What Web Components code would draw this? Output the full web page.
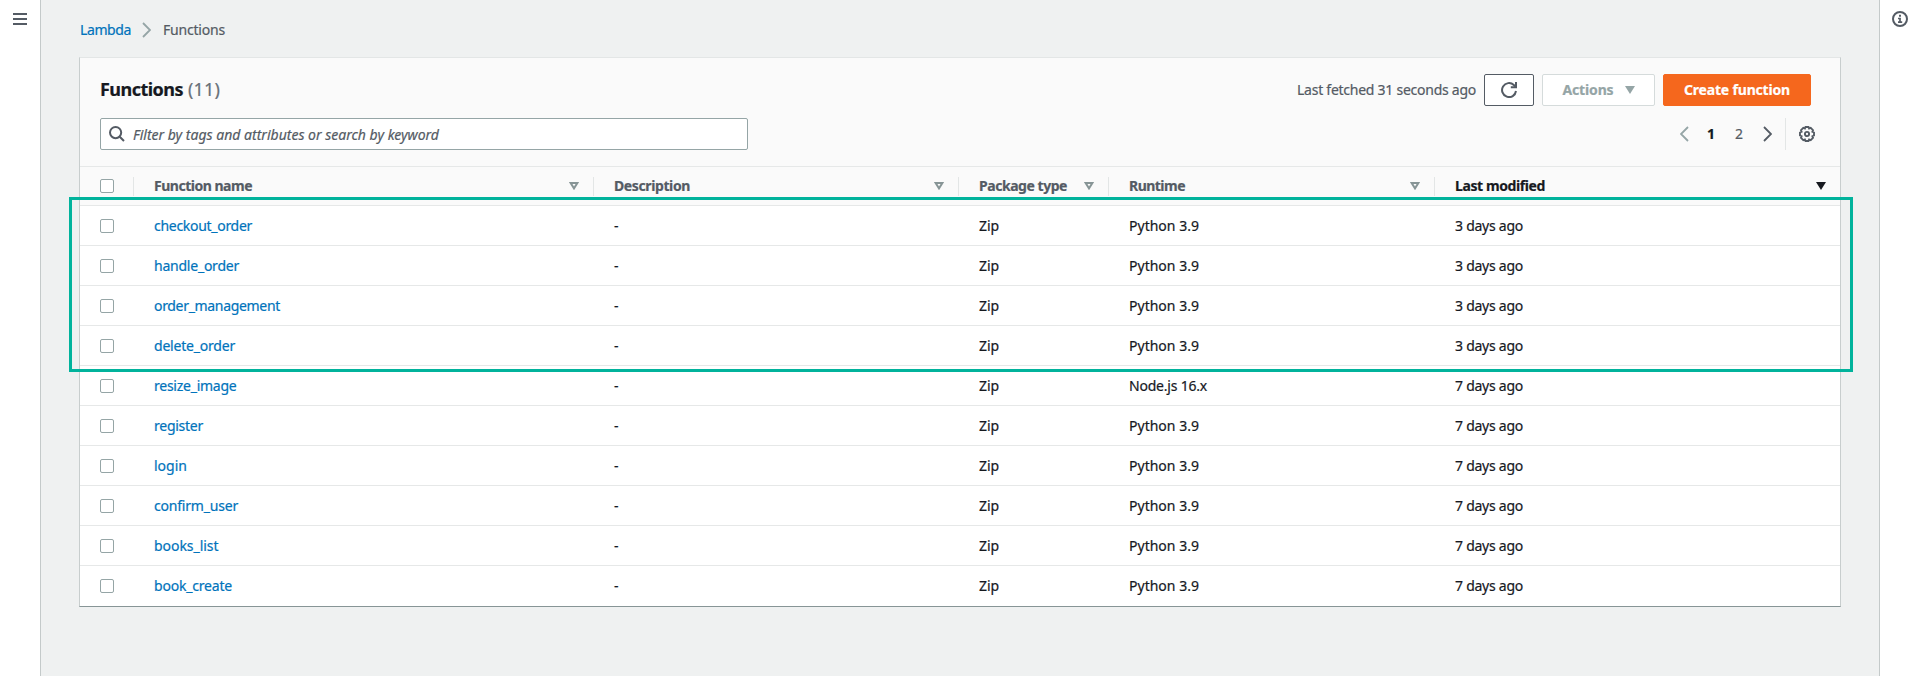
<!DOCTYPE html>
<html lang="en">
<head>
<meta charset="utf-8">
<title>Functions - Lambda</title>
<style>
html,body{margin:0;height:100%}
body{font:14px/22px "Noto Sans","Open Sans",sans-serif;color:#16191f;overflow:hidden;-webkit-text-stroke:.2px currentColor}
</style>
</head>
<body>
<console-shell>
  <crumb-trail></crumb-trail>
  <functions-panel></functions-panel>
</console-shell>
<script>
function define(name, html, setup) {
  customElements.define(name, class extends HTMLElement {
    connectedCallback() {
      if (this.shadowRoot) return;
      this.attachShadow({ mode: 'open' }).innerHTML = html;
      if (setup) setup.call(this, this.shadowRoot);
    }
  });
}

/* One line of text tracked to a given width. */
define('fit-text', `<style>:host{display:inline-block;white-space:pre;font-kerning:normal}span{display:inline-block}</style><span><slot></slot></span>`, function (root) {
  const w = parseFloat(this.getAttribute('w'));
  const s = root.querySelector('span');
  const n = this.textContent.length;
  const now = s.getBoundingClientRect().width;
  if (w && n > 1 && now) {
    s.style.letterSpacing = ((w - now) / n).toFixed(3) + 'px';
  }
});

const ICONS = {
  menu: ['14', '12', '<path d="M0 1h14M0 6h14M0 11h14" stroke-width="2"/>'],
  info: ['16', '16', '<circle cx="8" cy="8" r="7" stroke-width="2"/><path d="M6 7.5h2.9M8 7v4M6 11.2h4.2" stroke-width="1.7"/><path d="M7 4.8h2" stroke-width="1.9"/>'],
  chevron: ['9', '16', '<path d="M1 1l7 7-7 7" stroke-width="1.8"/>'],
  back: ['9', '16', '<path d="M8 1L1 8l7 7" stroke-width="1.8"/>'],
  search: ['16', '16', '<circle cx="6.6" cy="6.6" r="5.6" stroke-width="2"/><path d="M10.7 10.7l4.3 4.3" stroke-width="2"/>'],
  refresh: ['16', '16', '<path d="M15 9a7 7 0 1 1-2.2-6.1L15 5" stroke-width="2"/><path d="M15 0v5.2h-5.2" stroke-width="2"/>'],
  gear: ['16', '16', '<path d="M6.5 1h3l.6 1.5 1.6-.6 2.3 2.3-.6 1.6 1.6.7v3l-1.6.7.6 1.6-2.3 2.3-1.6-.6-.6 1.5h-3l-.6-1.5-1.6.6L2 11.800l.6-1.600L1 9.500v-3l1.600-.700L2 4.200l2.300-2.300 1.600.600z" stroke-width="1.9"/><circle cx="8" cy="8" r="2.100" stroke-width="1.900"/>'],
  caret: ['10', '8', '<path d="M0 0h10L5 8z" fill="currentColor" stroke="none"/>'],
  sort: ['10', '8', '<path d="M1.600 1h6.800L5 6.400z" stroke-width="2"/>']
};
define('ui-icon', `<style>:host{display:inline-flex;flex:none}svg{display:block;fill:none;stroke:currentColor}</style><div></div>`, function (root) {
  const [w, h, body] = ICONS[this.getAttribute('name')];
  root.querySelector('div').innerHTML = `<svg width="${w}" height="${h}" viewBox="0 0 ${w} ${h}">${body}</svg>`;
});

define('check-box', `<style>:host{display:block;box-sizing:border-box;width:14px;height:14px;border:1px solid #95a5a6;border-radius:2px;background:#fff}</style>`);

define('ui-button', `<style>
:host{display:flex;box-sizing:border-box;height:32px;align-items:center;justify-content:center;border:1px solid #545b64;border-radius:2px;background:#fff;color:#545b64;font-weight:700}
:host([kind=icon]){width:50px}
:host([kind=disabled]){width:113px;gap:11px;color:#95a5a6;border-color:#d5dbdb}
:host([kind=primary]){width:148px;background:#f5671d;border-color:#f5671d;color:#fff}
</style><slot></slot>`);

define('console-shell', `<style>
:host{display:grid;grid-template-columns:41px 1fr 41px;height:100vh}
aside{box-sizing:border-box;background:#fff;color:#545b64;display:flex;align-items:flex-start}
.l{border-right:1px solid #c4caca;padding:13px 0 0 13px}
.r{border-left:1px solid #c4caca;padding:11px 0 0 12px}
main{background:#eff1f1;padding:19px 38px 0}
</style><aside class="l"><ui-icon name="menu"></ui-icon></aside><main><slot></slot></main><aside class="r"><ui-icon name="info"></ui-icon></aside>`);

define('crumb-trail', `<style>
:host{display:flex;height:22px;align-items:center;padding-left:1px;color:#545b64}
a{color:#0073bb;width:62px}.c{width:21px;display:flex;color:#95a5a6}
</style><a><fit-text w="51">Lambda</fit-text></a><span class="c"><ui-icon name="chevron"></ui-icon></span><fit-text w="62">Functions</fit-text>`);

define('page-nav', `<style>
:host{display:flex;align-items:center;height:32px;color:#545b64}
.p{color:#95a5a6;width:27px;display:flex}b{color:#16191f;width:28px}.n{width:28px}.x{width:22px;display:flex}
.g{height:32px;border-left:1px solid #e3e6e6;padding-left:13px;display:flex;align-items:center}
</style><span class="p"><ui-icon name="back"></ui-icon></span><b>1</b><span class="n">2</span><span class="x"><ui-icon name="chevron"></ui-icon></span><span class="g"><ui-icon name="gear"></ui-icon></span>`);

define('panel-header', `<style>
:host{display:block;height:108px;box-sizing:border-box;padding:16px 25px 0 20px}
.a,.b{display:flex;height:32px;align-items:center}
.b{margin-top:12px;justify-content:space-between}
h2{margin:0 0 2px;flex:1;font-size:18px;line-height:22px;font-weight:700;display:flex;gap:5px}
h2 span{font-weight:400;color:#687078}
.t{color:#545b64;margin:0 8px 1px 0}
.btns{display:flex;gap:8px;margin-right:4px}
.s{box-sizing:border-box;width:648px;height:32px;border:1px solid #95a5a6;border-radius:2px;background:#fff;display:flex;align-items:center;gap:8px;padding-left:8px;color:#545b64;font-style:italic}
.s fit-text{margin-top:2px}
</style>
<div class="a"><h2><fit-text w="83">Functions</fit-text><span><fit-text w="32">(11)</fit-text></span></h2>
<fit-text class="t" w="179">Last fetched 31 seconds ago</fit-text>
<div class="btns"><ui-button kind="icon"><ui-icon name="refresh"></ui-icon></ui-button>
<ui-button kind="disabled"><fit-text w="51">Actions</fit-text><ui-icon name="caret"></ui-icon></ui-button>
<ui-button kind="primary"><fit-text w="106">Create function</fit-text></ui-button></div></div>
<div class="b"><div class="s"><ui-icon name="search"></ui-icon><fit-text w="306">Filter by tags and attributes or search by keyword</fit-text></div><page-nav></page-nav></div>`);

const COLS = '53px 460px 365px 150px 326px 1fr';

define('col-head', `<style>
:host{display:flex;box-sizing:border-box;height:19px;align-items:center;justify-content:space-between;border-left:1px solid #e3e6e6;padding:0 14px 0 20px;font-weight:700;color:#545b64}
ui-icon{color:#879596}
:host([on]),:host([on]) ui-icon{color:#16191f}
</style><slot></slot><i></i>`, function (root) {
  const icon = document.createElement('ui-icon');
  icon.setAttribute('name', this.hasAttribute('on') ? 'caret' : 'sort');
  root.querySelector('i').replaceWith(icon);
});

define('head-row', `<style>
:host{display:grid;grid-template-columns:${COLS};height:40px;box-sizing:border-box;border-top:1px solid #e6e8e8;border-bottom:1px solid #e6e8e8;align-items:center}
check-box{margin-left:20px}
</style><check-box></check-box>
<col-head><fit-text w="98">Function name</fit-text></col-head>
<col-head><fit-text w="76">Description</fit-text></col-head>
<col-head><fit-text w="88">Package type</fit-text></col-head>
<col-head><fit-text w="56">Runtime</fit-text></col-head>
<col-head on><fit-text w="90">Last modified</fit-text></col-head>`);

define('function-row', `<style>
:host{display:grid;grid-template-columns:${COLS};height:40px;box-sizing:border-box;border-bottom:1px solid #e6e8e8;align-items:center}
:host([last]){border-bottom-color:transparent}
check-box{margin-left:20px}
div{padding-left:21px}
a{color:#0073bb}
</style><check-box></check-box><div><a class="n"></a></div><div>-</div><div><fit-text w="20">Zip</fit-text></div><div class="r"></div><div class="m"></div>`, function (root) {
  const put = (sel, text, w) => {
    const f = document.createElement('fit-text');
    f.textContent = text; f.setAttribute('w', w);
    root.querySelector(sel).append(f);
  };
  put('.n', this.getAttribute('name'), this.getAttribute('w'));
  const rt = this.getAttribute('runtime');
  put('.r', rt, rt[0] === 'N' ? 78 : 70);
  put('.m', this.getAttribute('modified'), 68);
});

define('functions-panel', `<style>
:host{display:block;position:relative;margin-top:16px;height:550px;box-sizing:border-box;border:1px solid #c8cece;border-top-color:#e3e6e6;border-bottom-color:#879596;background:#fff}
.top{background:#fafafa}
.mark{position:absolute;left:-11px;top:139px;width:1784px;height:175px;box-sizing:border-box;border:3px solid #01b39c;pointer-events:none}
</style><div class="top"><panel-header></panel-header><head-row></head-row></div><div class="rows"></div><div class="mark"></div>`, function (root) {
  const data = [['checkout_order', 98], ['handle_order', 85], ['order_management', 126], ['delete_order', 81], ['resize_image', 82.5], ['register', 49], ['login', 33], ['confirm_user', 84], ['books_list', 64.5], ['book_create', 78]];
  data.forEach(([name, w], i) => {
    const r = document.createElement('function-row');
    r.setAttribute('name', name);
    r.setAttribute('w', w);
    r.setAttribute('runtime', i === 4 ? 'Node.js 16.x' : 'Python 3.9');
    r.setAttribute('modified', (i < 4 ? 3 : 7) + ' days ago');
    if (i === 9) r.setAttribute('last', '');
    root.querySelector('.rows').append(r);
  });
});
</script>
</body>
</html>
